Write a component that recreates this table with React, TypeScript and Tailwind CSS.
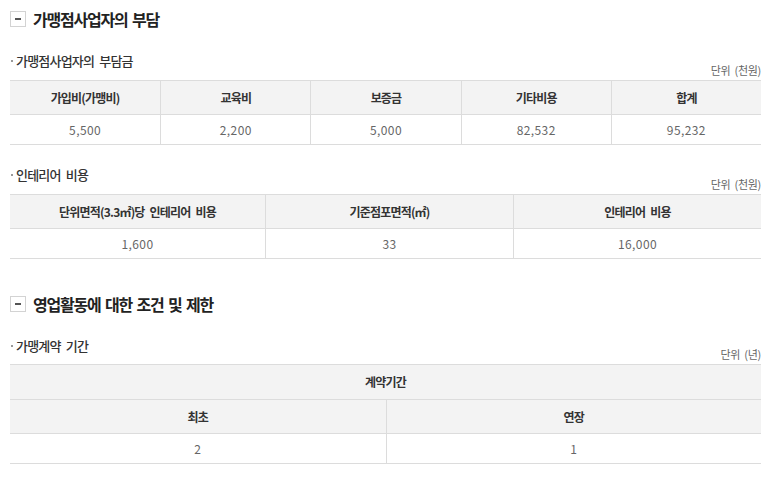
import React from "react";

const FONT = { fontFamily: "'Noto Sans CJK KR', 'Noto Sans', sans-serif" };

function Title({ text }: { text: string }) {
  return (
    <div className="h-[38px] flex items-center">
      <span className="w-[16px] h-[16px] border border-[#d3d3d3] flex items-center justify-center bg-white">
        <span className="block w-[6px] h-[2px] bg-[#555]" />
      </span>
      <span className="ml-[7px] text-[16px] leading-[20px] font-bold text-[#222] tracking-[-1.2px] [word-spacing:2px]">{text}</span>
    </div>
  );
}

function SubRow({ text, unit, h }: { text: string; unit: string; h: string }) {
  return (
    <div className={`flex justify-between items-start ${h}`}>
      <div className="flex items-center h-[18px]">
        <span className="block w-[2px] h-[2px] bg-[#999] ml-[1px]" />
        <span className="ml-[3px] text-[13px] leading-[18px] font-medium text-[#333] tracking-[-0.8px] [word-spacing:3px]">{text}</span>
      </div>
      <span className="self-end mb-[3px] text-[11px] leading-[14px] text-[#666] tracking-[-0.3px] [word-spacing:2px]">{unit}</span>
    </div>
  );
}

function HCell({ children, first, h = "h-[34px]" }: { children: React.ReactNode; first?: boolean; h?: string }) {
  return (
    <div
      className={`${h} bg-[#f3f3f3] border-b border-[#dcdcdc] ${first ? "" : "border-l"} flex items-center justify-center text-[12px] font-bold text-[#333] tracking-[-0.8px] [word-spacing:3px]`}
    >
      {children}
    </div>
  );
}

function BCell({ children, first }: { children: React.ReactNode; first?: boolean }) {
  return (
    <div
      className={`h-[30px] border-b border-[#dcdcdc] ${first ? "" : "border-l"} flex items-center justify-center text-[12px] text-[#666] tracking-[0.4px]`}
    >
      {children}
    </div>
  );
}

export default function App() {
  return (
    <div className="w-[773px] h-[488px] bg-white pl-[10px] pr-[12px] overflow-hidden" style={FONT}>
      <Title text="가맹점사업자의 부담" />
      <div className="mt-[14px]">
        <SubRow text="가맹점사업자의 부담금" unit="단위 (천원)" h="h-[28px]" />
      </div>
      <div className="grid grid-cols-5 border-t border-[#dcdcdc]">
        <HCell first>가입비(가맹비)</HCell>
        <HCell>교육비</HCell>
        <HCell>보증금</HCell>
        <HCell>기타비용</HCell>
        <HCell>합계</HCell>
        <BCell first>5,500</BCell>
        <BCell>2,200</BCell>
        <BCell>5,000</BCell>
        <BCell>82,532</BCell>
        <BCell>95,232</BCell>
      </div>

      <div className="mt-[21px]">
        <SubRow text="인테리어 비용" unit="단위 (천원)" h="h-[28px]" />
      </div>
      <div className="grid grid-cols-[255px_248px_1fr] border-t border-[#dcdcdc]">
        <HCell first>단위면적(3.3㎡)당 인테리어 비용</HCell>
        <HCell>기준점포면적(㎡)</HCell>
        <HCell>인테리어 비용</HCell>
        <BCell first>1,600</BCell>
        <BCell>33</BCell>
        <BCell>16,000</BCell>
      </div>

      <div className="mt-[26px]">
        <Title text="영업활동에 대한 조건 및 제한" />
      </div>
      <div className="mt-[14px]">
        <SubRow text="가맹계약 기간" unit="단위 (년)" h="h-[27px]" />
      </div>
      <div className="grid grid-cols-2 border-t border-[#dcdcdc]">
        <div className="col-span-2">
          <HCell first h="h-[35px]">계약기간</HCell>
        </div>
        <HCell first>최초</HCell>
        <HCell>연장</HCell>
        <BCell first>2</BCell>
        <BCell>1</BCell>
      </div>
    </div>
  );
}
